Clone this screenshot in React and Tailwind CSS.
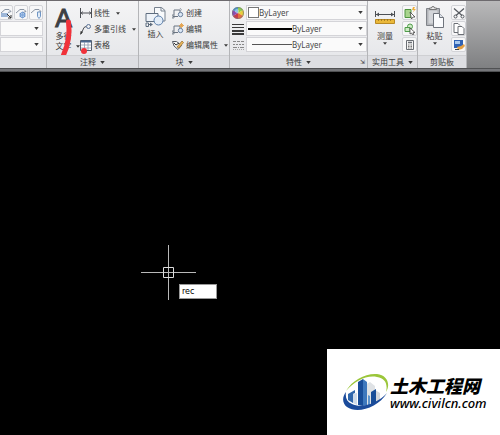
import React, { useState } from "react";

function Arrow({ small }) {
  return (
    <svg
      viewBox="0 0 6 4"
      className={small ? "h-[3px] w-1 shrink-0" : "h-[3px] w-[5px] shrink-0"}
      aria-hidden="true"
    >
      <path d="M0 0h6L3 4z" fill="#3c3c3c" />
    </svg>
  );
}

function Panel({ title, className, arrow, corner, children }) {
  return (
    <section
      className={`flex shrink-0 flex-col border-r border-[#b4b5b8] ${className}`}
    >
      <div className="relative flex h-[54px] items-start bg-linear-to-b from-[#f4f4f5] to-[#e7e8eb] pt-1">
        {children}
      </div>
      <div className="relative flex h-[13px] items-center justify-center gap-1 border-t border-[#cfd0d3] bg-[#dddee2]">
        {title && <h2 className="whitespace-nowrap">{title}</h2>}
        {arrow && <Arrow />}
        {corner && (
          <button
            type="button"
            aria-label="特性设置"
            className="absolute right-0.5 text-[6px] leading-none"
          >
            ⇲
          </button>
        )}
      </div>
    </section>
  );
}

function Tool({ icon, label, arrow }) {
  return (
    <button
      type="button"
      className="flex h-4 items-center gap-0.5 whitespace-nowrap"
    >
      {icon}
      <span>{label}</span>
      {arrow && (
        <span className="pl-1">
          <Arrow small />
        </span>
      )}
    </button>
  );
}

function IconButton({ label, children }) {
  return (
    <button
      type="button"
      aria-label={label}
      className="flex h-[15px] w-[15px] items-center justify-center rounded-xs border border-[#d3d4d8] bg-[#f7f7f8]"
    >
      {children}
    </button>
  );
}

function Combo({ label, value, children }) {
  return (
    <div className="relative flex h-[15px] items-center border border-[#d4d4d8] bg-[#fafafa] pl-px">
      {children}
      <select
        aria-label={label}
        className="min-w-0 flex-1 appearance-none bg-transparent text-[8px] leading-3 text-[#4a4a4a] outline-none"
      >
        <option>{value}</option>
      </select>
      <span className="pointer-events-none absolute right-[3px] flex">
        <Arrow />
      </span>
    </div>
  );
}

/* icons */

function LayerIcon({ kind }) {
  return (
    <svg viewBox="0 0 12 12" className="h-3 w-3" fill="none" aria-hidden="true">
      <path d="M1 6 5 2.500h4l2 2-3 1" fill="#f4f6f9" stroke="#8b95a3" />
      {kind === "freeze" && (
        <>
          <circle cx="7.500" cy="8" r="2.500" fill="#e3eefb" stroke="#4f80c2" />
          <path d="M7.500 4.500v7M4.500 6.500l6 3M4.500 9.500l6-3" stroke="#7ba3d8" strokeWidth=".8" />
        </>
      )}
      {kind === "lock" && (
        <path d="M7.500 5h3v4.500L9 11.500 7.500 9.500z" fill="#dfeaf7" stroke="#7096c4" />
      )}
      {kind === "match" && (
        <>
          <path d="M1 7h7M1 9h7" stroke="#4477b8" />
          <path d="m7 7 4 4M11 8v3H8" stroke="#333" />
        </>
      )}
    </svg>
  );
}

function DimensionIcon() {
  return (
    <svg viewBox="0 0 12 10" className="h-2.5 w-3" fill="none" aria-hidden="true">
      <path d="M.5 0v10M11.500 0v10M1 5h10" stroke="#4c4f54" />
      <path d="m3 3.500-2 1.500 2 1.500M9 3.500l2 1.500-2 1.500" stroke="#4c4f54" strokeWidth=".8" />
    </svg>
  );
}

function LeaderIcon() {
  return (
    <svg viewBox="0 0 12 12" className="h-3 w-3" fill="none" aria-hidden="true">
      <path d="M1 11 4 4.500 6 3.500" stroke="#4c4f54" />
      <path d="m0 12 .7-4L3 9z" fill="#333" />
      <circle cx="8.500" cy="3.500" r="2" stroke="#587094" />
    </svg>
  );
}

function TableIcon() {
  return (
    <svg viewBox="0 0 12 12" className="h-3 w-3" fill="none" aria-hidden="true">
      <path d="M.5 1.500h11v10H.5z" fill="#fff" stroke="#55606f" />
      <path d="M1 2.500h10" stroke="#4a6891" strokeWidth="2" />
      <path d="M1 6h10M1 9h10M4.500 3v8M8 3v8" stroke="#8a99ad" strokeWidth=".8" />
    </svg>
  );
}

function InsertIcon() {
  return (
    <svg
      viewBox="0 0 21 22"
      className="h-[22px] w-[21px]"
      fill="none"
      aria-hidden="true"
    >
      <path d="M9.500 9V1.500h7l3.500 3V15h-3" fill="#f8fafc" stroke="#77818e" />
      <path d="M16 1.500V5h4" stroke="#77818e" />
      <path d="M1 7.500h12v8H1z" fill="#eef3f9" stroke="#5f6e80" />
      <circle cx="13.500" cy="14.500" r="4.500" fill="#e3edf8" stroke="#5b7da8" />
      <path d="M1 20.500V17h2.500v3.500zM3 18.500h3" stroke="#5f6e80" />
      <path d="m5 16.500 3 2-3 2z" fill="#5f6e80" />
    </svg>
  );
}

function BlockIcon({ kind }) {
  return (
    <svg viewBox="0 0 12 12" className="h-3 w-3" fill="none" aria-hidden="true">
      <path d="M2 8V3h6v3M1 9.500h5" stroke="#6a7482" />
      <circle cx="8.500" cy="7.500" r="2.200" fill="#dce8f5" stroke="#6a7f9c" />
      <path d="M0 11V8h2v3z" stroke="#6a7482" strokeWidth=".8" />
      {kind === "create" && <path d="m8 1 1.500 2L8 4" stroke="#9aa3ae" />}
      {kind === "edit" && (
        <path d="M9.500 0v5M7 2.500h5M8 1l3 3M11 1 8 4" stroke="#e3a04a" strokeWidth=".9" />
      )}
    </svg>
  );
}

function AttributeIcon() {
  return (
    <svg viewBox="0 0 12 12" className="h-3 w-3" fill="none" aria-hidden="true">
      <path d="M.5 2.500h4l5 4-3.500 4-4-3.500z" fill="#f2f2f2" stroke="#555b63" />
      <path d="m2 4 2 2 3-2" stroke="#333" />
      <path d="m5 8 5-6 1.500 1.500L7 9z" fill="#e9b75b" stroke="#94692a" strokeWidth=".7" />
    </svg>
  );
}

function ColorWheel() {
  return (
    <svg viewBox="0 0 12 12" className="h-3 w-3" aria-hidden="true">
      <path d="M6 6V0a6 6 0 0 1 5.200 3z" fill="#8fd04f" />
      <path d="M6 6l5.200-3a6 6 0 0 1 0 6z" fill="#e8cf3e" />
      <path d="M6 6l5.200 3A6 6 0 0 1 6 12z" fill="#e6703c" />
      <path d="M6 6v6A6 6 0 0 1 .8 9z" fill="#c93b4b" />
      <path d="M6 6 .8 9a6 6 0 0 1 0-6z" fill="#8a4bb0" />
      <path d="M6 6 .8 3A6 6 0 0 1 6 0z" fill="#4a9bd0" />
      <circle cx="6" cy="6" r="5.500" fill="none" stroke="#777" strokeWidth=".7" />
      <circle cx="5" cy="4" r="2" fill="#fff" opacity=".4" />
    </svg>
  );
}

function LineweightIcon() {
  return (
    <svg viewBox="0 0 12 12" className="h-3 w-3" aria-hidden="true">
      <path d="M0 1h12v1H0zM0 4h12v1H0zM0 7h12v2H0zM0 10h12v2H0z" fill="#3a3a3a" />
    </svg>
  );
}

function LinetypeIcon() {
  return (
    <svg viewBox="0 0 12 12" className="h-3 w-3" fill="none" aria-hidden="true">
      <path d="M1 2.500h11" stroke="#888" strokeDasharray="3 1" />
      <path d="M1 5.500h11" stroke="#888" strokeDasharray="2 1" />
      <path d="M1 8.500h11" stroke="#888" strokeDasharray="4 1 1 1" />
      <path d="M1 10.500h11" stroke="#aaa" strokeDasharray="1 1" />
    </svg>
  );
}

function MeasureIcon() {
  return (
    <svg
      viewBox="0 0 20 13"
      className="h-[13px] w-5"
      fill="none"
      aria-hidden="true"
    >
      <path d="M.5 0v6M19.500 0v6M1 3.500h18" stroke="#4c4f54" />
      <path d="m1 3.500 3-2v4zM19 3.500l-3-2v4z" fill="#4c4f54" />
      <path d="M.5 8.500h19v4H.5z" fill="#eab83a" stroke="#b98a25" />
      <path d="M3.500 8v2M6.500 8v2M9.500 8v2M12.500 8v2M15.500 8v2" stroke="#8f6a1a" strokeWidth=".7" />
    </svg>
  );
}

function QuickSelectIcon() {
  return (
    <svg viewBox="0 0 12 12" className="h-3 w-3" fill="none" aria-hidden="true">
      <path d="M1 2.500h6v8H1z" fill="#a8d48d" stroke="#4f9440" />
      <path d="m6 5 5 5-2 0-1.500 2z" fill="#fff" stroke="#444" strokeWidth=".8" />
      <path d="M9 0 8 3h2L8.500 5.500 12 2H10l1-2z" fill="#efae3a" />
    </svg>
  );
}

function SelectAllIcon() {
  return (
    <svg viewBox="0 0 12 12" className="h-3 w-3" fill="none" aria-hidden="true">
      <circle cx="6" cy="3.500" r="2.500" fill="#cdebc4" stroke="#4f9c4a" />
      <path d="M1 4.500h5v4H1z" fill="#cdebc4" stroke="#4f9c4a" />
      <path d="m6 5 5 4.500-2 .2.800 1.800-1.300.5-.8-2L6 11z" fill="#fff" stroke="#444" strokeWidth=".8" />
    </svg>
  );
}

function CalculatorIcon() {
  return (
    <svg viewBox="0 0 12 12" className="h-3 w-3" fill="none" aria-hidden="true">
      <path d="M2.500 1.500h7v9h-7z" fill="#f5f5f5" stroke="#6b6f75" />
      <path d="M4 3.500h4" stroke="#6b6f75" strokeWidth="1.500" />
      <path d="M4 6h4M4 7.500h4M4 9h4" stroke="#777" strokeDasharray="1 .5" />
    </svg>
  );
}

function PasteIcon() {
  return (
    <svg
      viewBox="0 0 18 22"
      className="h-[22px] w-[18px]"
      fill="none"
      aria-hidden="true"
    >
      <path d="M.5 2.500h13v17H.5z" fill="#b3b5ba" stroke="#808389" />
      <path d="M2.500 4.500h9v13h-9z" fill="#d3d5d9" />
      <path d="M3.500 3.500V2H5.500a1.500 1.500 0 0 1 3 0h2v1.500z" fill="#eee" stroke="#777" />
      <path d="M7.500 7.500h6l4 4v10h-10z" fill="#fafbfd" stroke="#70757d" />
      <path d="M13.500 7.500v4h4" fill="#dde2e9" stroke="#70757d" />
    </svg>
  );
}

function CutIcon() {
  return (
    <svg viewBox="0 0 12 12" className="h-3 w-3" fill="none" aria-hidden="true">
      <path d="m1 1.500 8 7M11 1.500l-8 7" stroke="#55595f" strokeWidth="1.200" />
      <circle cx="2.500" cy="9.500" r="1.500" stroke="#55595f" />
      <circle cx="9.500" cy="9.500" r="1.500" stroke="#55595f" />
    </svg>
  );
}

function CopyIcon() {
  return (
    <svg viewBox="0 0 12 12" className="h-3 w-3" fill="none" aria-hidden="true">
      <path d="M5 9.500H1v-9h4l2 2" fill="#fff" stroke="#6b6f75" />
      <path d="M5 3.500h4l2 2v6H5z" fill="#fff" stroke="#6b6f75" />
    </svg>
  );
}

function MatchIcon() {
  return (
    <svg viewBox="0 0 12 12" className="h-3 w-3" aria-hidden="true">
      <path d="M1 1h9v8H1z" fill="#2f62b5" />
      <path d="M2 2h5v3H2z" fill="#a8c8ee" />
      <path d="m4 8 4-1 3-2 1 2-3 3-4 1z" fill="#e5a044" />
      <path d="M2 10h4v1H2z" fill="#444" />
    </svg>
  );
}

function LogoMark() {
  return (
    <svg
      viewBox="0 0 46 38"
      className="h-[38px] w-[46px] shrink-0"
      aria-hidden="true"
    >
      <path d="m22 12 5-3 5 4v19H22z" fill="#dfe2e5" />
      <path d="m32 17 5 3v7l-5 4z" fill="#d3d7dc" />
      <path d="m5 21 7-4v3l-2 1v9l-5-3z" fill="#2f66ab" />
      <path d="m10 21 4-1v12l-4-2z" fill="#cfdbe9" />
      <path d="m15 9 5-3v27l-5-1z" fill="#184d98" />
      <path d="m20 6 4 3v23l-4 1z" fill="#3e78bd" />
      <path d="m28 19 5-3v14l-5 2z" fill="#184d98" />
      <path d="m25 22 2 1v9h-2z" fill="#5f94cc" />
      <path
        d="M3 18C9 7 23 0 34 1c10 1 14 10 9 18 2-8-1-14-9-15C23 2 12 8 3 18Z"
        fill="#9bc63a"
      />
      <path
        d="M3 19c-4 5-4 11 1 15 10 7 31 1 40-14C35 30 19 36 9 31 4 29 2 25 3 19Z"
        fill="#1b4b9b"
      />
    </svg>
  );
}

function Ribbon() {
  return (
    <header className="bg-[#77787b]">
      <div className="flex overflow-hidden border-t border-[#6d6a6e] bg-linear-to-b from-[#b9b9ba] to-[#7f8082] text-[8px] leading-3 text-[#3b3b3b]">
        <Panel className="w-[47px]">
          <div className="flex w-full flex-col gap-px pr-[3px]">
            <div className="flex justify-end gap-px">
              <IconButton label="匹配图层">
                <LayerIcon kind="match" />
              </IconButton>
              <IconButton label="冻结图层">
                <LayerIcon kind="freeze" />
              </IconButton>
              <IconButton label="锁定图层">
                <LayerIcon kind="lock" />
              </IconButton>
            </div>
            <Combo label="图层状态" value="" />
            <Combo label="图层" value="" />
          </div>
        </Panel>

        <Panel title="注释" arrow className="w-[92px]">
          <button
            type="button"
            className="flex w-[33px] shrink-0 flex-col items-center"
          >
            <span className="font-['Liberation_Sans'] text-[25px] leading-[26px] text-[#3c3f44] [-webkit-text-stroke:1px_#3c3f44]">
              A
            </span>
            <span className="leading-[10px]">多行</span>
            <span className="flex items-center gap-1 pl-2 leading-[10px]">
              文字
              <Arrow small />
            </span>
          </button>
          <div className="flex flex-col">
            <Tool icon={<DimensionIcon />} label="线性" arrow />
            <Tool icon={<LeaderIcon />} label="多重引线" arrow />
            <Tool icon={<TableIcon />} label="表格" />
          </div>
          {/* red pen marks over the tools */}
          <svg
            viewBox="0 0 50 58"
            className="pointer-events-none absolute top-0 left-0 h-[58px] w-[50px]"
            fill="none"
            aria-hidden="true"
          >
            <path
              d="M21.500 21c1.500 11 0 22-5 33"
              stroke="#f0323a"
              strokeWidth="5"
              strokeLinecap="round"
            />
            <circle cx="37" cy="50" r="3" fill="#f0323a" />
          </svg>
        </Panel>

        <Panel title="块" arrow className="w-[91px]">
          <button
            type="button"
            className="flex w-[33px] shrink-0 flex-col items-center pt-px"
          >
            <InsertIcon />
            <span>插入</span>
          </button>
          <div className="flex flex-col">
            <Tool icon={<BlockIcon kind="create" />} label="创建" />
            <Tool icon={<BlockIcon kind="edit" />} label="编辑" />
            <Tool icon={<AttributeIcon />} label="编辑属性" arrow />
          </div>
        </Panel>

        <Panel title="特性" arrow corner className="w-[138px]">
          <div className="grid w-full grid-cols-[14px_1fr] items-center gap-y-px pl-0.5">
            <ColorWheel />
            <Combo label="对象颜色" value="ByLayer">
              <span className="h-[11px] w-[11px] border border-[#777] bg-white" />
            </Combo>
            <LineweightIcon />
            <Combo label="线宽" value="ByLayer">
              <span className="h-0.5 w-11 bg-black" />
            </Combo>
            <LinetypeIcon />
            <Combo label="线型" value="ByLayer">
              <span className="ml-1 h-px w-10 bg-[#555]" />
            </Combo>
          </div>
        </Panel>

        <Panel title="实用工具" arrow className="w-[50px]">
          <button
            type="button"
            className="flex w-[34px] shrink-0 flex-col items-center pt-1.5"
          >
            <MeasureIcon />
            <span className="pt-1.5">测量</span>
            <Arrow small />
          </button>
          <div className="flex flex-col gap-px">
            <IconButton label="快速选择">
              <QuickSelectIcon />
            </IconButton>
            <IconButton label="全部选择">
              <SelectAllIcon />
            </IconButton>
            <IconButton label="快速计算器">
              <CalculatorIcon />
            </IconButton>
          </div>
        </Panel>

        <Panel title="剪贴板" className="w-[49px]">
          <button
            type="button"
            className="flex w-[33px] shrink-0 flex-col items-center pt-px"
          >
            <PasteIcon />
            <span className="pt-0.5">粘贴</span>
            <Arrow small />
          </button>
          <div className="flex flex-col gap-px">
            <IconButton label="剪切">
              <CutIcon />
            </IconButton>
            <IconButton label="复制">
              <CopyIcon />
            </IconButton>
            <IconButton label="特性匹配">
              <MatchIcon />
            </IconButton>
          </div>
        </Panel>
      </div>
      <div className="h-1 border-y border-[#505153] bg-[#75767a]" />
    </header>
  );
}

export default function App() {
  const [command, setCommand] = useState("rec");

  return (
    <div className="flex min-h-screen flex-col bg-black font-['Noto_Sans','Noto_Sans_CJK_SC',sans-serif]">
      <Ribbon />
      <main className="relative flex flex-1 flex-col items-end justify-end">
        {/* drawing cursor and its command box */}
        <svg
          viewBox="0 0 55 55"
          className="absolute top-[173px] left-[141px] h-[55px] w-[55px]"
          fill="none"
          stroke="#b9b9b9"
          aria-hidden="true"
        >
          <path d="M0 27.500h55M27.500 0v55" />
          <path d="M22.500 22.500h10v10h-10z" stroke="#dcdcdc" />
        </svg>
        <input
          type="text"
          aria-label="命令"
          value={command}
          onChange={(e) => setCommand(e.target.value)}
          className="absolute top-[212px] left-[179px] h-[15px] w-[38px] border border-[#999] bg-white px-0.5 font-['DejaVu_Sans'] text-[8px] text-black outline-none"
        />

        <a
          href="#"
          className="flex h-[86px] w-[173px] items-center gap-px bg-white pl-4 text-black"
        >
          <LogoMark />
          <span className="flex flex-col whitespace-nowrap pt-0.5 italic">
            <span className="font-['Noto_Sans_CJK_SC'] text-[18px] leading-5 font-black">
              土木工程网
            </span>
            <span className="text-[13px] leading-4 font-medium">
              www.civilcn.com
            </span>
          </span>
        </a>
      </main>
    </div>
  );
}
